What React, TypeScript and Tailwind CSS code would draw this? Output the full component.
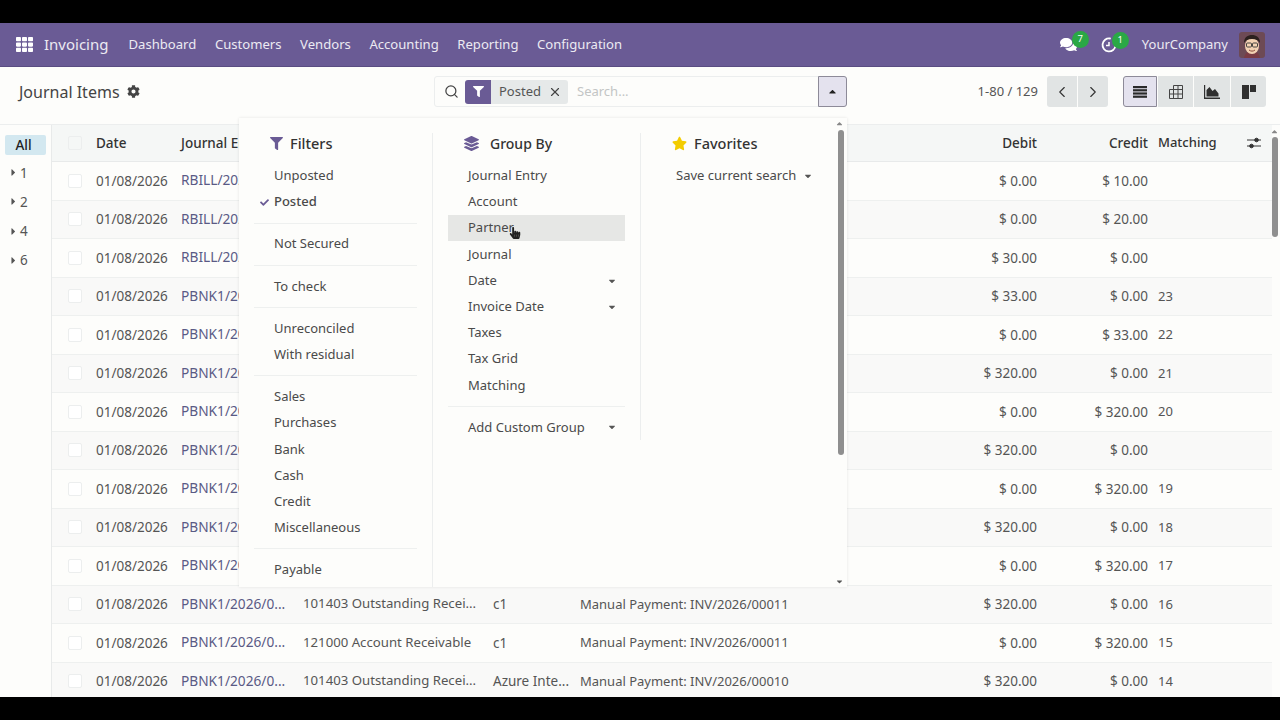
import { FaCaretDown, FaCaretRight, FaCaretUp, FaCheck, FaCog, FaComments, FaFilter, FaLayerGroup, FaStar, FaTh, FaHandPointer } from 'react-icons/fa';
import { ChevronLeft, ChevronRight, Search, X } from 'lucide-react';

const font = "font-['Noto_Sans',sans-serif]";

const menu = ['Dashboard', 'Customers', 'Vendors', 'Accounting', 'Reporting', 'Configuration'];

const rows = [
  { entry: 'RBILL/2026/0...', debit: '$ 0.00', credit: '$ 10.00', match: '' },
  { entry: 'RBILL/2026/0...', debit: '$ 0.00', credit: '$ 20.00', match: '' },
  { entry: 'RBILL/2026/0...', debit: '$ 30.00', credit: '$ 0.00', match: '' },
  { entry: 'PBNK1/2026/0...', debit: '$ 33.00', credit: '$ 0.00', match: '23' },
  { entry: 'PBNK1/2026/0...', debit: '$ 0.00', credit: '$ 33.00', match: '22' },
  { entry: 'PBNK1/2026/0...', debit: '$ 320.00', credit: '$ 0.00', match: '21' },
  { entry: 'PBNK1/2026/0...', debit: '$ 0.00', credit: '$ 320.00', match: '20' },
  { entry: 'PBNK1/2026/0...', debit: '$ 320.00', credit: '$ 0.00', match: '' },
  { entry: 'PBNK1/2026/0...', debit: '$ 0.00', credit: '$ 320.00', match: '19' },
  { entry: 'PBNK1/2026/0...', debit: '$ 320.00', credit: '$ 0.00', match: '18' },
  { entry: 'PBNK1/2026/0...', debit: '$ 0.00', credit: '$ 320.00', match: '17' },
  { entry: 'PBNK1/2026/0...', account: '101403 Outstanding Recei...', partner: 'c1', label: 'Manual Payment: INV/2026/00011', debit: '$ 320.00', credit: '$ 0.00', match: '16' },
  { entry: 'PBNK1/2026/0...', account: '121000 Account Receivable', partner: 'c1', label: 'Manual Payment: INV/2026/00011', debit: '$ 0.00', credit: '$ 320.00', match: '15' },
  { entry: 'PBNK1/2026/0...', account: '101403 Outstanding Recei...', partner: 'Azure Inte...', label: 'Manual Payment: INV/2026/00010', debit: '$ 320.00', credit: '$ 0.00', match: '14' },
];

function Divider() {
  return <div className="my-[7.5px] h-px bg-[#eef0ef]" />;
}

function Item({ label, bold, check, caret, hover }: { label: string; bold?: boolean; check?: boolean; caret?: boolean; hover?: boolean }) {
  return (
    <div className={`relative flex h-[26.2px] items-center justify-between pl-5 pr-2 text-[#4a4a4a] ${bold ? 'font-medium' : ''} ${hover ? 'bg-[#e6e7e5]' : ''}`}>
      {check && <FaCheck className="absolute left-[6px] top-[9px] text-[9px] text-[#6a5b95]" />}
      <span>{label}</span>
      {caret && <FaCaretDown className="text-[10px] text-[#555]" />}
    </div>
  );
}

function Heading({ icon, title, className }: { icon: React.ReactNode; title: string; className: string }) {
  return (
    <div className={`mb-[8.700px] flex h-[21px] items-center pl-[16px] font-medium text-[#333] ${className}`}>
      {icon}
      <span>{title}</span>
    </div>
  );
}

function SearchDropdown() {
  return (
    <div className="absolute left-[239px] top-[51px] z-10 flex h-[469px] w-[608px] overflow-hidden bg-[#fdfdfb] pt-[15px] text-[13px] shadow-[0_0_3px_rgba(0,0,0,0.10)]">
      <div className="w-[194px] shrink-0 border-r border-[#eceeee] px-[15px]">
        <Heading className="gap-[7px] text-[14.500px]" icon={<FaFilter className="text-[13px] text-[#6a5b95]" />} title="Filters" />
        <Item label="Unposted" />
        <Item label="Posted" bold check />
        <Divider />
        <Item label="Not Secured" />
        <Divider />
        <Item label="To check" />
        <Divider />
        <Item label="Unreconciled" />
        <Item label="With residual" />
        <Divider />
        <Item label="Sales" />
        <Item label="Purchases" />
        <Item label="Bank" />
        <Item label="Cash" />
        <Item label="Credit" />
        <Item label="Miscellaneous" />
        <Divider />
        <Item label="Payable" />
      </div>
      <div className="h-[307px] w-[208px] shrink-0 border-r border-[#eceeee] px-[15px]">
        <Heading className="gap-[11px] text-[14px]" icon={<FaLayerGroup className="text-[15px] text-[#6a5b95]" />} title="Group By" />
        <Item label="Journal Entry" />
        <Item label="Account" />
        <Item label="Partner" hover />
        <Item label="Journal" />
        <Item label="Date" caret />
        <Item label="Invoice Date" caret />
        <Item label="Taxes" />
        <Item label="Tax Grid" />
        <Item label="Matching" />
        <Divider />
        <Item label="Add Custom Group" caret />
      </div>
      <div className="w-[190px] shrink-0 px-[15px]">
        <Heading className="gap-[7px] text-[14.500px]" icon={<FaStar className="text-[15px] text-[#f3cc00]" />} title="Favorites" />
        <div className="flex h-[26.2px] items-center gap-[7px] pl-5 text-[#4a4a4a]">
          <span className="whitespace-nowrap">Save current search</span>
          <FaCaretDown className="text-[10px] text-[#555]" />
        </div>
      </div>
      {/* dropdown scrollbar */}
      <FaCaretUp className="absolute right-[3px] top-[1px] text-[9px] text-[#888]" />
      <div className="absolute right-[3px] top-[12px] h-[325px] w-[6px] rounded-full bg-[#8f8f8f]" />
      <FaCaretDown className="absolute bottom-[1px] right-[3px] text-[9px] text-[#555]" />
      {/* mouse pointer */}
      <FaHandPointer className="absolute left-[270px] top-[109px] text-[12px] text-[#222]" />
    </div>
  );
}

function Avatar() {
  return (
    <svg viewBox="0 0 26 26" className="h-[26px] w-[26px] rounded-[3px]">
      <rect width="26" height="26" fill="#6d4a55" />
      <path d="M5 26c1-5 4-7 8-7s7 2 8 7z" fill="#7a3b45" />
      <ellipse cx="13" cy="14" rx="7" ry="8" fill="#f3d2b3" />
      <path d="M5 11c0-6 4-8 8-8s8 2 8 8c-2-3-4-4-8-4s-6 1-8 4z" fill="#2c211f" />
      <rect x="7.500" y="11" width="5" height="4" rx="1" fill="none" stroke="#333" strokeWidth="0.9" />
      <rect x="13.500" y="11" width="5" height="4" rx="1" fill="none" stroke="#333" strokeWidth="0.9" />
      <path d="M10 18c2 1.500 4 1.500 6 0" fill="none" stroke="#8a4a3a" strokeWidth="1" />
    </svg>
  );
}

function Badge({ n }: { n: string }) {
  return (
    <span className="absolute -right-[12px] -top-[5px] flex h-[17px] w-[17px] items-center justify-center rounded-full bg-[#2aa845] text-[9.500px] text-white">
      {n}
    </span>
  );
}

function ActivityIcon() {
  return (
    <svg viewBox="0 0 16 16" className="h-[16px] w-[16px]" fill="none" stroke="#fff" strokeWidth="1.800">
      <path d="M9 1.500a6.500 6.500 0 1 0 5.500 7" strokeLinecap="round" />
      <path d="M8 5v3.500H5" strokeWidth="1.500" />
    </svg>
  );
}

function ListIcon() {
  return (
    <svg viewBox="0 0 14 12" className="h-[12px] w-[14px]" fill="#2a2a2a">
      <rect y="0" width="14" height="2.200" />
      <rect y="3.200" width="14" height="2.200" />
      <rect y="6.400" width="14" height="2.200" />
      <rect y="9.600" width="14" height="2.200" />
    </svg>
  );
}

function PivotIcon() {
  return (
    <svg viewBox="0 0 14 14" className="h-[14px] w-[14px]" fill="none" stroke="#444" strokeWidth="1">
      <path d="M4.500 .5h9v13H.5v-9h13M4.500 .5v13M9 .5v13M.5 9h13" />
    </svg>
  );
}

function GraphIcon() {
  return (
    <svg viewBox="0 0 16 14" className="h-[14px] w-[16px]" fill="#2f2f2f">
      <path d="M0 0h1.200v12.500H16V14H0z" />
      <path d="M2.500 11.500V5l3-3 3 4 2.500-2 3.500 4.500v3z" />
    </svg>
  );
}

function KanbanIcon() {
  return (
    <svg viewBox="0 0 14 14" className="h-[14px] w-[14px]" fill="#2f2f2f">
      <rect x="0" y="0" width="7" height="14" />
      <rect x="8" y="0" width="6" height="7" />
    </svg>
  );
}

function SlidersIcon() {
  return (
    <svg viewBox="0 0 14 12" className="h-[12px] w-[14px]" fill="#333" stroke="#333">
      <path d="M0 3h14M0 9h14" strokeWidth="1" />
      <circle cx="9.500" cy="3" r="1.800" />
      <circle cx="4.500" cy="9" r="1.800" />
    </svg>
  );
}

export default function App() {
  return (
    <div className={`flex h-screen flex-col overflow-hidden bg-black py-[23px] ${font} text-[13px]`}>
      {/* Top navbar */}
      <nav className="flex h-[44px] shrink-0 items-center border-b border-[#5a4d82] bg-[#6a5b95] pl-4 pr-[15px] text-[#eceaf2]">
        <FaTh className="mr-[11px] text-[17px] text-white" />
        <span className="mr-5 text-[15px]">Invoicing</span>
        <div className="flex gap-[18.600px] text-[13.100px]">
          {menu.map(m => (
            <span key={m}>{m}</span>
          ))}
        </div>
        <div className="ml-auto flex items-center">
          <span className="relative mr-[24px] text-[17px] text-white">
            <FaComments />
            <Badge n="7" />
          </span>
          <span className="relative mr-[25px] text-white">
            <ActivityIcon />
            <Badge n="1" />
          </span>
          <span className="mr-[11px]">YourCompany</span>
          <Avatar />
        </div>
      </nav>

      <main className="relative flex min-h-0 flex-1 flex-col overflow-hidden bg-[#fdfdfb]">
        {/* Control panel */}
        <div className="flex h-[57px] shrink-0 items-start pl-[19px] pr-[14px] pt-[9px]">
          <div className="flex h-[31px] w-[415px] items-center gap-[7px] text-[16px] text-[#444]">
            <span>Journal Items</span>
            <FaCog className="text-[13px] text-[#444]" />
          </div>
          <div className="flex h-[31px] w-[413px] items-center rounded-[3px] border border-[#eceeee] pl-[9px]">
            <Search size={15} strokeWidth={2} className="mr-[6px] text-[#444]" />
            <span className="flex h-[24px] w-[26px] items-center justify-center rounded-l-[3px] bg-[#6a5b95]">
              <FaFilter className="text-[11px] text-white" />
            </span>
            <span className="flex h-[24px] w-[77px] items-center rounded-r-[3px] bg-[#e6e9e9] pl-[8px] text-[#555]">
              Posted
              <X size={14} strokeWidth={2} className="ml-[7px] text-[#444]" />
            </span>
            <span className="ml-[9px] text-[#c3c5c5]">Search...</span>
            <span className="-mr-px ml-auto flex h-[31px] w-[29px] items-center justify-center rounded-r-[3px] border border-[#8d8a98] bg-[#e4e2ee]">
              <FaCaretUp className="text-[11px] text-[#222]" />
            </span>
          </div>
          <span className="ml-auto mr-[9px] self-center pb-[17px] text-[#555]">1-80 / 129</span>
          <div className="flex h-[31px] gap-px">
            <span className="flex w-[30px] items-center justify-center rounded-l-[3px] bg-[#e1e4e4]">
              <ChevronLeft size={18} strokeWidth={1.5} className="text-[#333]" />
            </span>
            <span className="flex w-[30px] items-center justify-center rounded-r-[3px] bg-[#e1e4e4]">
              <ChevronRight size={18} strokeWidth={1.5} className="text-[#333]" />
            </span>
          </div>
          <div className="ml-[15px] flex h-[31px] gap-px">
            <span className="flex w-[34px] items-center justify-center rounded-l-[3px] border border-[#8d8a98] bg-[#e4e2ee]">
              <ListIcon />
            </span>
            <span className="flex w-[35px] items-center justify-center bg-[#e1e4e4]">
              <PivotIcon />
            </span>
            <span className="flex w-[36px] items-center justify-center bg-[#e1e4e4]">
              <GraphIcon />
            </span>
            <span className="flex w-[35px] items-center justify-center rounded-r-[3px] bg-[#e1e4e4]">
              <KanbanIcon />
            </span>
          </div>
        </div>

        {/* Body */}
        <div className="flex min-h-0 flex-1 border-t border-[#eceeee]">
          <aside className="w-[52px] shrink-0 border-r border-[#e8eaea] px-[5px] pt-[10px]">
            <div className="mb-[3px] flex h-[20px] w-[41px] items-center justify-center rounded-[2px] bg-[#d3e8f0] pr-[4px] text-[13.500px] font-medium text-[#222]">All</div>
            {['1', '2', '4', '6'].map(n => (
              <div key={n} className="flex h-[29.3px] items-center gap-px pl-[3px] text-[13.500px] text-[#555]">
                <FaCaretRight className="text-[11px]" />
                <span>{n}</span>
              </div>
            ))}
          </aside>
          <div className="mr-[8px] min-w-0 flex-1">
            <div className="flex h-[37px] items-center border-b border-[#e8eaea] bg-[#f5f7f6] font-medium text-[#333]">
              <div className="w-[44px] pl-[16px]">
                <span className="block h-[14px] w-[14px] rounded-[2px] border border-[#eceeee]" />
              </div>
              <div className="w-[85px] text-[13.500px]">Date</div>
              <div className="w-[122px] whitespace-nowrap text-[13.500px]">Journal Entry</div>
              <div className="w-[190px]" />
              <div className="w-[87px]" />
              <div className="w-[300px]" />
              <div className="w-[157px] text-right text-[13.500px]">Debit</div>
              <div className="w-[111px] text-right text-[13.500px]">Credit</div>
              <div className="ml-[10px] w-[70px]">Matching</div>
              <div className="ml-[19px]">
                <SlidersIcon />
              </div>
            </div>
            {rows.map((r, i) => (
              <div key={i} className={`flex h-[38.5px] items-center border-b border-[#eef0ef] text-[#555] ${i % 2 === 1 ? 'bg-[#f9f9f8]' : ''}`}>
                <div className="w-[44px] pl-[16px]">
                  <span className="block h-[14px] w-[14px] rounded-[2px] border border-[#eceeee] bg-white" />
                </div>
                <div className="w-[85px] whitespace-nowrap text-[13.500px]">01/08/2026</div>
                <div className="w-[122px] whitespace-nowrap text-[13.700px] text-[#5a5a85]">{r.entry}</div>
                <div className="w-[190px] whitespace-nowrap text-[13.200px]">{r.account}</div>
                <div className="w-[87px] whitespace-nowrap text-[13.500px]">{r.partner}</div>
                <div className="w-[300px] whitespace-nowrap">{r.label}</div>
                <div className="w-[157px] text-right text-[13.500px]">{r.debit}</div>
                <div className="w-[111px] text-right text-[13.500px]">{r.credit}</div>
                <div className="ml-[10px] w-[70px]">{r.match}</div>
              </div>
            ))}
          </div>
        </div>

        <SearchDropdown />

        {/* page scrollbar */}
        <FaCaretUp className="absolute right-[1px] top-[60px] text-[9px] text-[#888]" />
        <div className="absolute right-[2px] top-[70px] h-[100px] w-[6px] rounded-full bg-[#8f8f8f]" />
      </main>
    </div>
  );
}
